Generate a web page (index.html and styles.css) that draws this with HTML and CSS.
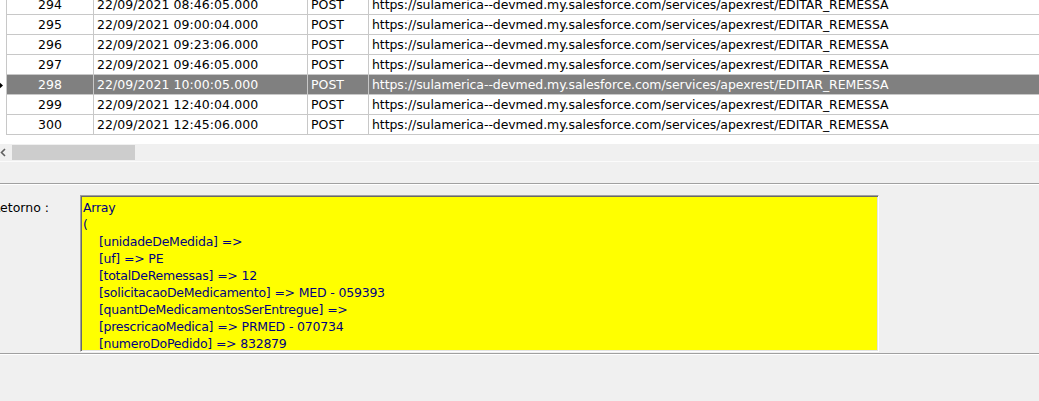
FILE: index.html
```html
<!DOCTYPE html>
<html>
<head>
<meta charset="utf-8">
<link rel="stylesheet" href="styles.css">
</head>
<body>
<div class="grid">
  <div class="rows">
    <div class="row"><div class="ind"></div><div class="c id">294</div><div class="c dt">22/09/2021 08:46:05.000</div><div class="c mt">POST</div><div class="c url">https://sulamerica--devmed.my.salesforce.com/services/apexrest/EDITAR_REMESSA</div></div>
    <div class="row"><div class="ind"></div><div class="c id">295</div><div class="c dt">22/09/2021 09:00:04.000</div><div class="c mt">POST</div><div class="c url">https://sulamerica--devmed.my.salesforce.com/services/apexrest/EDITAR_REMESSA</div></div>
    <div class="row"><div class="ind"></div><div class="c id">296</div><div class="c dt">22/09/2021 09:23:06.000</div><div class="c mt">POST</div><div class="c url">https://sulamerica--devmed.my.salesforce.com/services/apexrest/EDITAR_REMESSA</div></div>
    <div class="row"><div class="ind"></div><div class="c id">297</div><div class="c dt">22/09/2021 09:46:05.000</div><div class="c mt">POST</div><div class="c url">https://sulamerica--devmed.my.salesforce.com/services/apexrest/EDITAR_REMESSA</div></div>
    <div class="row sel"><div class="ind"><svg class="arrow" width="6" height="9" viewBox="0 0 6 9"><polygon points="-2,0 3,4.5 -2,9" fill="#000"/></svg></div><div class="c id">298</div><div class="c dt">22/09/2021 10:00:05.000</div><div class="c mt">POST</div><div class="c url">https://sulamerica--devmed.my.salesforce.com/services/apexrest/EDITAR_REMESSA</div></div>
    <div class="row"><div class="ind"></div><div class="c id">299</div><div class="c dt">22/09/2021 12:40:04.000</div><div class="c mt">POST</div><div class="c url">https://sulamerica--devmed.my.salesforce.com/services/apexrest/EDITAR_REMESSA</div></div>
    <div class="row"><div class="ind"></div><div class="c id">300</div><div class="c dt">22/09/2021 12:45:06.000</div><div class="c mt">POST</div><div class="c url">https://sulamerica--devmed.my.salesforce.com/services/apexrest/EDITAR_REMESSA</div></div>
  </div>
</div>
<div class="hscroll">
  <div class="sbtn"><svg width="8" height="9" viewBox="0 0 8 9"><polyline points="5,1 1.5,4.5 5,8" fill="none" stroke="#606060" stroke-width="1.6"/></svg></div>
  <div class="thumb"></div>
</div>
<div class="gap"></div>
<div class="panel">
  <div class="field">
    <div class="label">Retorno :</div>
    <div class="memo"><pre class="memo-text">Array
(
    [unidadeDeMedida] =&gt; 
    [uf] =&gt; PE
    [totalDeRemessas] =&gt; 12
    [solicitacaoDeMedicamento] =&gt; MED - 059393
    [quantDeMedicamentosSerEntregue] =&gt; 
    [prescricaoMedica] =&gt; PRMED - 070734
    [numeroDoPedido] =&gt; 832879
</pre></div>
  </div>
</div>
<div class="footer"></div>
</body>
</html>
```

FILE: styles.css
```css
html, body { margin: 0; padding: 0; }
body {
  width: 1039px;
  height: 401px;
  overflow: hidden;
  background: #f0f0f0;
  font-family: "DejaVu Sans", sans-serif;
  font-size: 12.5px;
  color: #000;
}
.grid {
  height: 144px;
  background: #fff;
  overflow: hidden;
}
.rows { margin-top: -5px; }
.row {
  display: flex;
  height: 20px;
  white-space: nowrap;
}
.ind {
  width: 6px;
  flex: none;
  display: flex;
  align-items: center;
}
.c {
  box-sizing: border-box;
  flex: none;
  height: 20px;
  padding-top: 1px;
  line-height: 18px;
  border-left: 1px solid #c8c8c8;
  border-bottom: 1px solid #c8c8c8;
  padding-left: 3px;
  overflow: hidden;
}
.id { width: 87px; text-align: center; padding-left: 0; }
.dt { width: 214px; letter-spacing: 0.05px; }
.mt { width: 61px; }
.url { width: 800px; letter-spacing: -0.08px; }
.sel .c { background: #808080; color: #fff; }
.hscroll {
  height: 17px;
  background: #f0f0f0;
  display: flex;
  align-items: center;
}
.sbtn { width: 12px; height: 15px; display: flex; align-items: center; }
.thumb { width: 123px; height: 15px; background: #cdcdcd; }
.gap {
  height: 21px;
  border-top: 1px solid #fbfbfb;
  border-bottom: 1px solid #a0a0a0;
}
.panel {
  border-top: 1px solid #fff;
  border-bottom: 1px solid #a0a0a0;
  height: 168px;
  overflow: hidden;
}
.field {
  display: flex;
  padding-top: 10px;
}
.label {
  width: 88px;
  margin-left: -8px;
  flex: none;
  padding-top: 4px;
  line-height: 17px;
}
.memo {
  width: 797px;
  height: 155px;
  background: #ffff00;
  border: 1px solid;
  border-color: #a0a0a0 #fff #fff #a0a0a0;
  box-shadow: inset 1px 1px 0 #696969, inset -1px -1px 0 #e3e3e3;
  overflow: hidden;
}
.memo-text {
  margin: 0;
  padding: 3px 0 0 2px;
  font: inherit;
  line-height: 17px;
  letter-spacing: -0.25px;
  word-spacing: 0.25px;
  color: #000080;
}
.footer { border-top: 1px solid #fff; height: 46px; }
```
